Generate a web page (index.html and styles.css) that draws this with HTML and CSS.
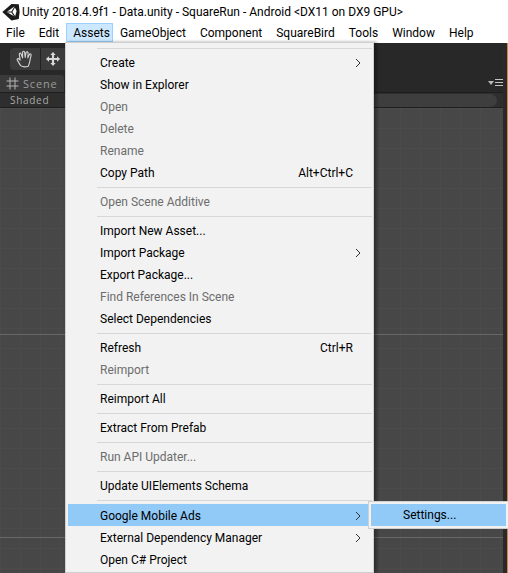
FILE: index.html
```html
<!DOCTYPE html>
<html lang="en">
<head>
    <meta charset="UTF-8">
    <meta name="viewport" content="width=device-width, initial-scale=1.0">
    <title>Unity 2018.4.9f1 - Data.unity - SquareRun - Android</title>
    <link rel="stylesheet" href="styles.css">
</head>
<body>
    <div class="window">
        <div class="titlebar">
            <svg class="unity-logo" width="18" height="18" viewBox="0 0 18 18">
                <path d="M0.3 9 L9.5 1 L16.8 1.2 L17.6 9 L16.8 16 L9.5 17.4 Z" fill="#1a1a1a"/>
                <path d="M4.6 9 L12.4 3.6 L14.6 8 L13 13.8 Z" fill="#fff"/>
                <path d="M4.6 8.4 H9.4 L12.4 3.4 L13.2 4 L10.4 9 L13.4 13.6 L12.6 14.2 L9.4 9.6 H4.6 Z" fill="#1a1a1a"/>
            </svg>
            <span>Unity 2018.4.9f1 - Data.unity - SquareRun - Android &lt;DX11 on DX9 GPU&gt;</span>
        </div>

        <div class="menubar">
            <span class="menubar-item">File</span>
            <span class="menubar-item">Edit</span>
            <span class="menubar-item active">Assets</span>
            <span class="menubar-item">GameObject</span>
            <span class="menubar-item">Component</span>
            <span class="menubar-item">SquareBird</span>
            <span class="menubar-item">Tools</span>
            <span class="menubar-item">Window</span>
            <span class="menubar-item">Help</span>
        </div>

        <div class="editor">
            <div class="scene-panel">
                <div class="toolbar">
                    <div class="tool-group">
                        <div class="tool tool-hand">
                            <svg width="22" height="22" viewBox="0 0 20 20" fill="none" stroke="#d2d2d2" stroke-width="1" stroke-linejoin="round" stroke-linecap="round">
                                <path d="M6 16 L3 11 Q2.5 9.5 4 9.5 L5.6 11 L4.8 5.5 Q5 4.3 6.2 4.8 L7.8 9 L7.8 3.6 Q8.6 2.4 9.6 3.6 L10.2 8.6 L11 3.8 Q12 3 12.8 4.2 L12.6 9 L14.2 5.4 Q15.4 5 15.6 6.2 L14.4 12 Q13.8 15 13 16.5 Q9 18 6 16 Z"/>
                            </svg>
                        </div>
                        <div class="tool">
                            <svg width="16" height="16" viewBox="0 0 18 18" fill="#d8d8d8">
                                <path d="M9 1 L12 4.5 L10.2 4.5 L10.2 7.8 L13.5 7.8 L13.5 6 L17 9 L13.5 12 L13.5 10.2 L10.2 10.2 L10.2 13.5 L12 13.5 L9 17 L6 13.5 L7.8 13.5 L7.8 10.2 L4.5 10.2 L4.5 12 L1 9 L4.5 6 L4.5 7.8 L7.8 7.8 L7.8 4.5 L6 4.5 Z"/>
                            </svg>
                        </div>
                    </div>
                </div>

                <div class="tab-row">
                    <div class="scene-tab">
                        <svg width="13" height="13" viewBox="0 0 13 13" stroke="#b4b4b4" stroke-width="1">
                            <path d="M4 0.5 V12.5 M9 0.5 V12.5 M0.5 4 H12.5 M0.5 9 H12.5"/>
                        </svg>
                        <span>Scene</span>
                    </div>
                    <div class="panel-menu">
                        <span class="panel-arrow"></span>
                        <span class="panel-lines"></span>
                    </div>
                </div>

                <div class="scene-bar">
                    <span class="shaded">Shaded</span>
                    <div class="search-pill"></div>
                </div>

                <div class="canvas">
                    <div class="canvas-cell first"></div>
                    <div class="canvas-cell second"></div>
                </div>
            </div>
            <div class="edge"></div>
        </div>

        <div class="menu">
            <div class="sep first"></div>
            <div class="item"><span>Create</span><svg class="chevron" width="6" height="10" viewBox="0 0 6 10"><path d="M1 1 L5 5 L1 9"/></svg></div>
            <div class="item"><span>Show in Explorer</span></div>
            <div class="item disabled"><span>Open</span></div>
            <div class="item disabled"><span>Delete</span></div>
            <div class="item disabled"><span>Rename</span></div>
            <div class="item"><span>Copy Path</span><span class="shortcut">Alt+Ctrl+C</span></div>
            <div class="sep"></div>
            <div class="item disabled"><span>Open Scene Additive</span></div>
            <div class="sep"></div>
            <div class="item"><span>Import New Asset...</span></div>
            <div class="item"><span>Import Package</span><svg class="chevron" width="6" height="10" viewBox="0 0 6 10"><path d="M1 1 L5 5 L1 9"/></svg></div>
            <div class="item"><span>Export Package...</span></div>
            <div class="item disabled"><span>Find References In Scene</span></div>
            <div class="item"><span>Select Dependencies</span></div>
            <div class="sep"></div>
            <div class="item"><span>Refresh</span><span class="shortcut">Ctrl+R</span></div>
            <div class="item disabled"><span>Reimport</span></div>
            <div class="sep"></div>
            <div class="item"><span>Reimport All</span></div>
            <div class="sep"></div>
            <div class="item"><span>Extract From Prefab</span></div>
            <div class="sep"></div>
            <div class="item disabled"><span>Run API Updater...</span></div>
            <div class="sep"></div>
            <div class="item"><span>Update UIElements Schema</span></div>
            <div class="sep last"></div>
            <div class="item selected"><span>Google Mobile Ads</span><svg class="chevron" width="6" height="10" viewBox="0 0 6 10"><path d="M1 1 L5 5 L1 9"/></svg></div>
            <div class="item"><span>External Dependency Manager</span><svg class="chevron" width="6" height="10" viewBox="0 0 6 10"><path d="M1 1 L5 5 L1 9"/></svg></div>
            <div class="item"><span>Open C# Project</span></div>
        </div>

        <div class="submenu">
            <div class="submenu-item">Settings...</div>
        </div>
    </div>
</body>
</html>
```

FILE: styles.css
```css
html, body {
    margin: 0;
    padding: 0;
}
body {
    font-family: Roboto, "Open Sans", sans-serif;
    font-size: 12px;
    color: #000;
    background-color: #fff;
}
.window {
    position: relative;
    display: flex;
    flex-direction: column;
    width: 508px;
    height: 573px;
    overflow: hidden;
}

/* title and menu bar */
.titlebar {
    display: flex;
    align-items: center;
    gap: 2px;
    height: 23px;
    padding-left: 2px;
    box-sizing: border-box;
}
.menubar {
    display: flex;
    height: 19px;
    margin-left: -1px;
}
.menubar-item {
    display: flex;
    align-items: center;
    padding: 0 6px;
    border: 1px solid transparent;
    box-sizing: border-box;
}
.menubar-item.active {
    padding-right: 2px;
    background-color: #cce8ff;
    border-color: #99d1ff;
}

/* dark editor behind the menu */
.editor {
    display: flex;
    flex: 1;
    min-height: 0;
    margin-top: 1px;
    background-color: #282828;
}
.scene-panel {
    display: flex;
    flex-direction: column;
    flex: 1;
}
.edge {
    width: 5px;
    background-color: #2a2a2a;
    border-right: 1px solid #c08a50;
    box-sizing: border-box;
}
.toolbar {
    height: 32px;
    padding: 5px 0 0 10px;
    box-sizing: border-box;
}
.tool-group {
    display: flex;
    width: 60px;
    height: 22px;
    background-color: #3b3b3b;
    border-radius: 4px;
}
.tool {
    display: flex;
    align-items: center;
    justify-content: center;
    width: 24px;
}
.tool-hand {
    width: 30px;
    border-right: 1px solid #222;
}
.tab-row {
    display: flex;
    justify-content: space-between;
    height: 17px;
}
.scene-tab {
    display: flex;
    align-items: center;
    gap: 4px;
    width: 64px;
    padding-left: 6px;
    box-sizing: border-box;
    background-color: #3a3a3a;
    border-radius: 0 3px 0 0;
    color: #9a9a9a;
    font-family: "Open Sans", sans-serif;
    font-size: 11px;
    letter-spacing: 0.8px;
}
.panel-menu {
    display: flex;
    align-items: center;
    gap: 1px;
    margin-top: -2px;
}
.panel-arrow {
    width: 0;
    height: 0;
    border-left: 3px solid transparent;
    border-right: 3px solid transparent;
    border-top: 4px solid #b8b8b8;
}
.panel-lines {
    width: 8px;
    height: 5px;
    border-top: 1px solid #c4c4c4;
    border-bottom: 1px solid #c4c4c4;
    background: linear-gradient(#c4c4c4, #c4c4c4) center / 100% 1px no-repeat;
}
.scene-bar {
    display: flex;
    align-items: center;
    height: 16px;
    background-color: #2e2e2e;
    border-top: 1px solid #1e1e1e;
    border-bottom: 1px solid #1e1e1e;
    box-sizing: border-box;
}
.shaded {
    width: 200px;
    padding-left: 10px;
    color: #a8a8a8;
    font-family: "Open Sans", sans-serif;
    font-size: 10px;
    letter-spacing: 0.7px;
}
.search-pill {
    flex: 1;
    height: 13px;
    margin-right: 6px;
    background-color: #3e3e3e;
    border-radius: 7px;
}
.canvas {
    flex: 1;
    background-color: #474747;
    background-image:
        linear-gradient(#4b4b4b 1px, transparent 1px),
        linear-gradient(90deg, #4b4b4b 1px, transparent 1px);
    background-size: 20px 20px;
}
.canvas-cell {
    border-bottom: 1px solid #686868;
}
.canvas-cell.first {
    height: 226px;
}
.canvas-cell.second {
    height: 202px;
}

/* Assets dropdown */
.menu {
    position: absolute;
    top: 42px;
    left: 65px;
    width: 309px;
    height: 531px;
    box-sizing: border-box;
    padding: 2px 0 0 2px;
    background-color: #f2f2f2;
    border: 1px solid #cfcfcf;
    box-shadow: 3px 0 3px rgba(0, 0, 0, 0.35);
}
.sep {
    height: 7px;
    margin-left: 29px;
    margin-right: 1px;
    background: linear-gradient(#d7d7d7, #d7d7d7) 0 4px / 100% 1px no-repeat;
}
.sep.first {
    height: 6px;
    background-position: 0 3px;
}
.sep.last {
    height: 8px;
}
.item {
    display: flex;
    align-items: center;
    justify-content: space-between;
    height: 22px;
    box-sizing: border-box;
    padding: 1px 11px 0 32px;
    margin-right: 1px;
}
.item.disabled {
    color: #6d6d6d;
}
.item.selected {
    background-color: #91c9f7;
}
.shortcut {
    padding-right: 8px;
}
.chevron {
    fill: none;
    stroke: #333;
    stroke-width: 1;
}

.submenu {
    position: absolute;
    top: 501px;
    left: 368px;
    width: 140px;
    height: 28px;
    padding: 2px;
    box-sizing: border-box;
    background-color: #f2f2f2;
    border: 1px solid #cfcfcf;
    border-right: none;
}
.submenu-item {
    display: flex;
    align-items: center;
    height: 22px;
    padding-left: 32px;
    background-color: #91c9f7;
}
```
